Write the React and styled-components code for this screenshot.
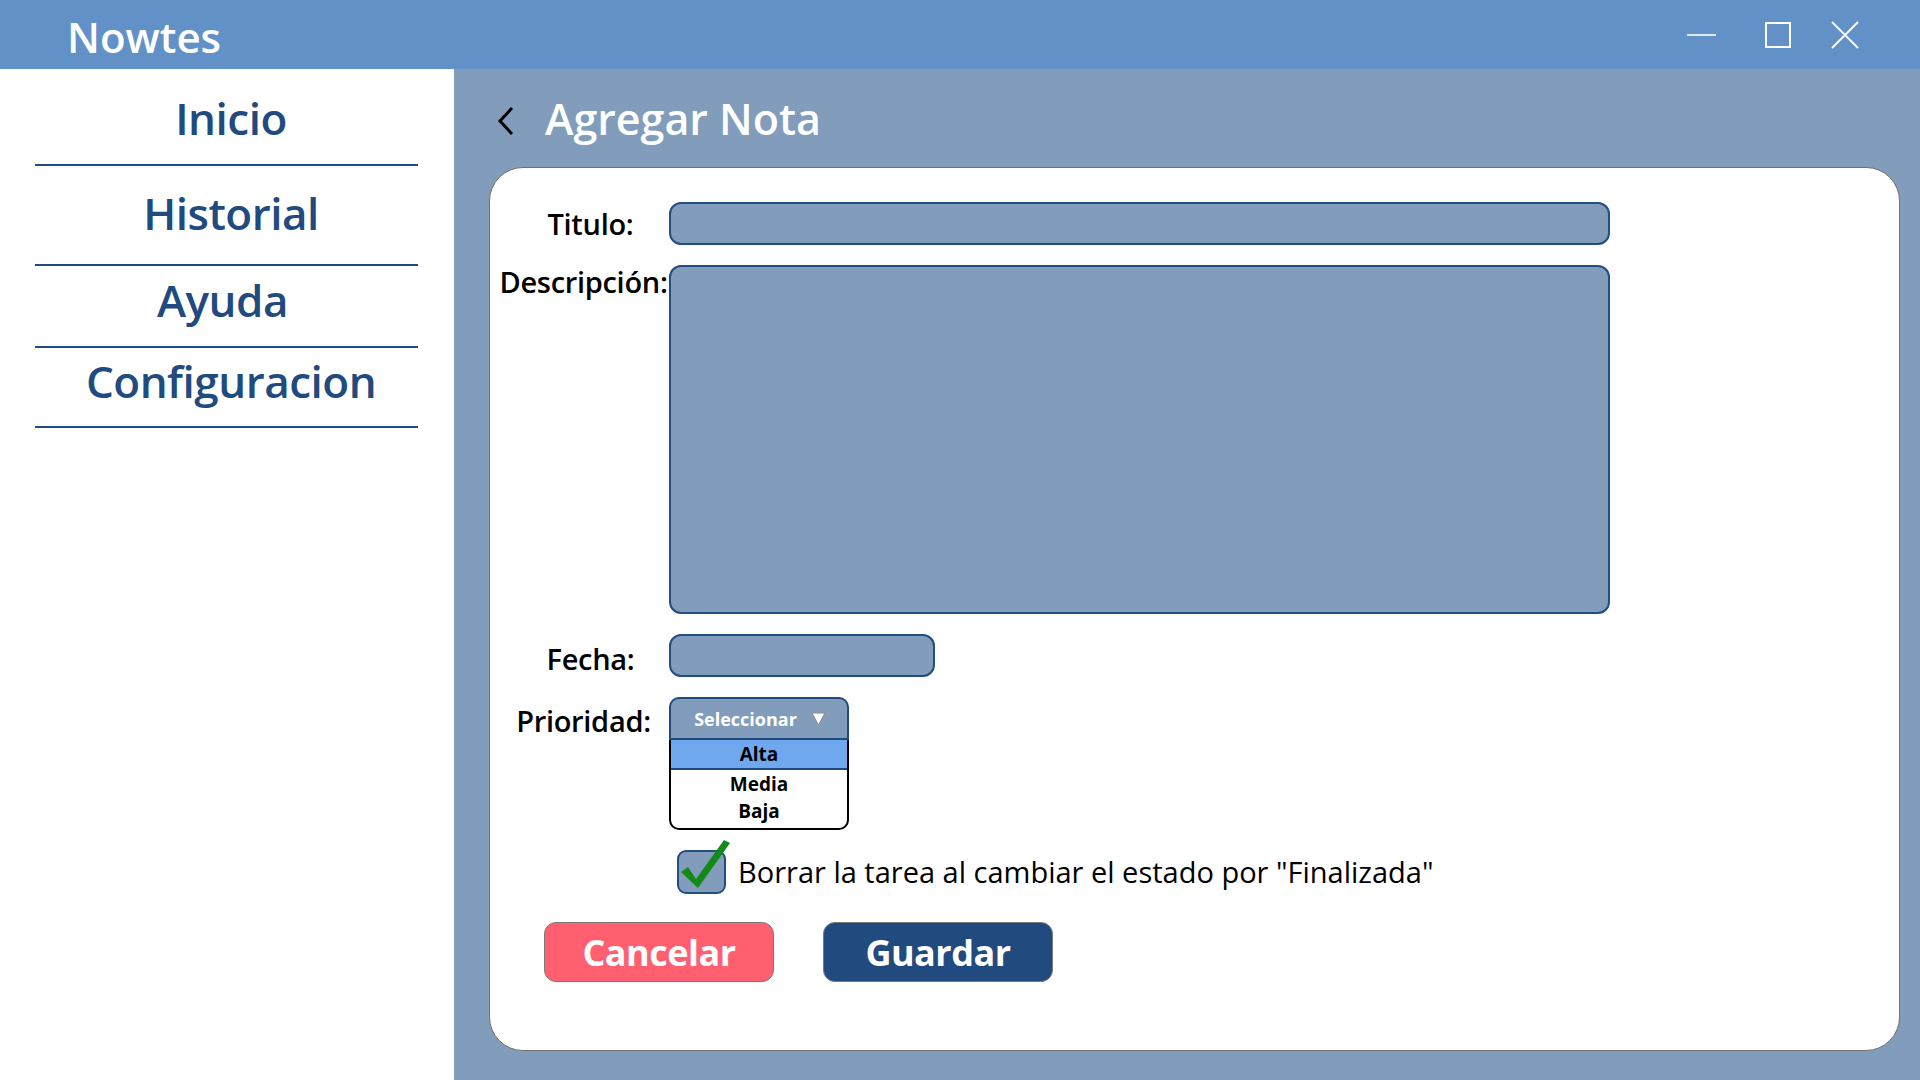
import React from 'react';
import styled, { createGlobalStyle } from 'styled-components';

const navy = '#214a7e';
const slate = '#819dbb';

const GlobalStyle = createGlobalStyle`
    body {
        margin: 0;
        font-family: 'Open Sans', 'Noto Sans', sans-serif;
    }
    * {
        box-sizing: border-box;
    }
`;

const Window = styled.div`
    width: 1920px;
    height: 1080px;
    display: flex;
    flex-direction: column;
    overflow: hidden;
`;

const TitleBar = styled.div`
    height: 69px;
    flex: none;
    background: #6291c8;
    display: flex;
    align-items: center;
    padding: 0 61px 0 67px;
`;

const AppName = styled.div`
    flex: 1;
    color: #fff;
    font-size: 42px;
    font-weight: 600;
    line-height: 69px;
    padding-top: 4px;
`;

const Controls = styled.div`
    display: flex;
    align-items: center;
`;

const ControlIcon = styled.svg`
    display: block;
    margin-left: ${p => p.$ml || 0}px;
`;

const Body = styled.div`
    flex: 1;
    display: flex;
    min-height: 0;
`;

const Sidebar = styled.nav`
    width: 454px;
    flex: none;
    background: #fff;
    padding: 0 36px 0 35px;
    display: flex;
    flex-direction: column;
`;

const NavItem = styled.div`
    height: ${p => p.$h}px;
    padding-top: ${p => p.$pt}px;
    padding-left: ${p => p.$pl}px;
    padding-right: ${p => p.$pr}px;
    border-bottom: 2px solid ${navy};
    text-align: center;
    color: ${navy};
    font-size: 44px;
    font-weight: 600;
    line-height: 1;
    letter-spacing: -0.5px;
`;

const Main = styled.main`
    flex: 1;
    background: ${slate};
    padding: 0 20px 29px 35px;
    display: flex;
    flex-direction: column;
`;

const Header = styled.div`
    height: 98px;
    flex: none;
    display: flex;
    align-items: center;
    padding: 2px 0 0 8px;
    gap: 31px;
`;

const BackIcon = styled.svg`
    display: block;
    margin-top: 4px;
`;

const PageTitle = styled.h1`
    margin: 0;
    color: #fff;
    font-size: 43px;
    font-weight: 600;
    line-height: 52px;
`;

const Card = styled.section`
    flex: 1;
    background: #fff;
    border: 1px solid #707070;
    border-radius: 34px;
    padding: 34px 0 0 8px;
`;

const Form = styled.div`
    display: grid;
    grid-template-columns: 171px 941px;
    row-gap: 20px;
`;

const Label = styled.label`
    text-align: center;
    color: #000;
    font-size: 29px;
    font-weight: 600;
    line-height: ${p => p.$lh || 43}px;
    padding-left: ${p => p.$dx || 0}px;
    padding-top: ${p => p.$dy || 0}px;
    margin-bottom: ${p => -(p.$dy || 0)}px;
    align-self: start;
    letter-spacing: -0.3px;
`;

const Field = styled.div`
    height: ${p => p.$h || 43}px;
    width: ${p => p.$w || 941}px;
    background: ${slate};
    border: 2px solid #244d80;
    border-radius: 12px;
`;

const Dropdown = styled.div`
    width: 180px;
`;

const DropHeader = styled.div`
    height: 43px;
    background: ${slate};
    border: 2px solid ${navy};
    border-radius: 10px 10px 0 0;
    display: flex;
    align-items: center;
    justify-content: center;
    gap: 14px;
    color: #fff;
    font-size: 18px;
    font-weight: 700;
    padding-left: 2px;
`;

const OptionList = styled.div`
    border: 2px solid #000;
    border-top: none;
    border-radius: 0 0 10px 10px;
    padding-bottom: 4px;
`;

const Option = styled.div`
    height: ${p => (p.$active ? 30 : 27)}px;
    display: flex;
    align-items: center;
    justify-content: center;
    font-size: 19px;
    font-weight: 700;
    color: #000;
    background: ${p => (p.$active ? '#6fa8ee' : 'transparent')};
    border-bottom: ${p => (p.$active ? `2px solid ${navy}` : 'none')};
`;

const CheckRow = styled.div`
    grid-column: 2;
    display: flex;
    align-items: center;
    gap: 12px;
    padding-left: 8px;
`;

const CheckBox = styled.div`
    position: relative;
    width: 49px;
    height: 44px;
    flex: none;
    background: ${slate};
    border: 2px solid #244d80;
    border-radius: 9px;
`;

const CheckMark = styled.svg`
    position: absolute;
    left: 1px;
    top: -13px;
`;

const CheckText = styled.span`
    font-size: 29px;
    font-weight: 500;
    line-height: 44px;
    color: #000;
`;

const Actions = styled.div`
    grid-column: 1 / -1;
    display: flex;
    gap: 49px;
    padding-left: 46px;
    margin-top: 8px;
`;

const Button = styled.button`
    width: 230px;
    height: 60px;
    border: 1px solid #7a7a7a;
    border-radius: 12px;
    background: ${p => (p.$danger ? '#ff5f6f' : navy)};
    color: #fff;
    font-family: inherit;
    font-size: 36px;
    font-weight: 700;
    letter-spacing: -0.5px;
    cursor: pointer;
`;

const navItems = [
    { label: 'Inicio', h: 97, pt: 27, pl: 9, pr: 0 },
    { label: 'Historial', h: 100, pt: 25, pl: 9, pr: 0 },
    { label: 'Ayuda', h: 82, pt: 12, pl: 0, pr: 8 },
    { label: 'Configuracion', h: 80, pt: 11, pl: 9, pr: 0 },
];

export default function App() {
    return (
        <Window>
            <GlobalStyle />
            <TitleBar>
                <AppName>Nowtes</AppName>
                <Controls>
                    <ControlIcon width="29" height="4" viewBox="0 0 29 4">
                        <line x1="0" y1="2" x2="29" y2="2" stroke="#fff" strokeWidth="1.6" />
                    </ControlIcon>
                    <ControlIcon $ml={49} width="26" height="26" viewBox="0 0 26 26">
                        <rect x="1" y="1" width="24" height="24" fill="none" stroke="#fff" strokeWidth="2" />
                    </ControlIcon>
                    <ControlIcon $ml={40} width="28" height="28" viewBox="0 0 28 28">
                        <path d="M1 1 L27 27 M27 1 L1 27" stroke="#fff" strokeWidth="1.8" />
                    </ControlIcon>
                </Controls>
            </TitleBar>
            <Body>
                <Sidebar>
                    {navItems.map(item => (
                        <NavItem key={item.label} $h={item.h} $pt={item.pt} $pl={item.pl} $pr={item.pr}>
                            {item.label}
                        </NavItem>
                    ))}
                </Sidebar>
                <Main>
                    <Header>
                        <BackIcon width="17" height="30" viewBox="0 0 17 30">
                            <polyline points="15,2 3,15 15,28" fill="none" stroke="#000" strokeWidth="3" />
                        </BackIcon>
                        <PageTitle>Agregar Nota</PageTitle>
                    </Header>
                    <Card>
                        <Form>
                            <Label $dx={14}>Titulo:</Label>
                            <Field />

                            <Label $lh={34}>Descripción:</Label>
                            <Field $h={349} />

                            <Label $dx={14} $dy={3}>Fecha:</Label>
                            <Field $w={266} />

                            <Label $dy={2}>Prioridad:</Label>
                            <Dropdown>
                                <DropHeader>
                                    Seleccionar
                                    <svg width="15" height="14" viewBox="0 0 15 14">
                                        <polygon points="1,1 14,1 7.5,13" fill="#fff" stroke="#8a8a8a" strokeWidth="1" />
                                    </svg>
                                </DropHeader>
                                <OptionList>
                                    <Option $active>Alta</Option>
                                    <Option>Media</Option>
                                    <Option>Baja</Option>
                                </OptionList>
                            </Dropdown>

                            <CheckRow>
                                <CheckBox>
                                    <CheckMark width="52" height="52" viewBox="0 0 52 52">
                                        <path d="M1 33 L8 28 L16 40 L44 1 L50 4 L18 49 Z" fill="#138a18" />
                                    </CheckMark>
                                </CheckBox>
                                <CheckText>Borrar la tarea al cambiar el estado por "Finalizada"</CheckText>
                            </CheckRow>

                            <Actions>
                                <Button $danger>Cancelar</Button>
                                <Button>Guardar</Button>
                            </Actions>
                        </Form>
                    </Card>
                </Main>
            </Body>
        </Window>
    );
}
